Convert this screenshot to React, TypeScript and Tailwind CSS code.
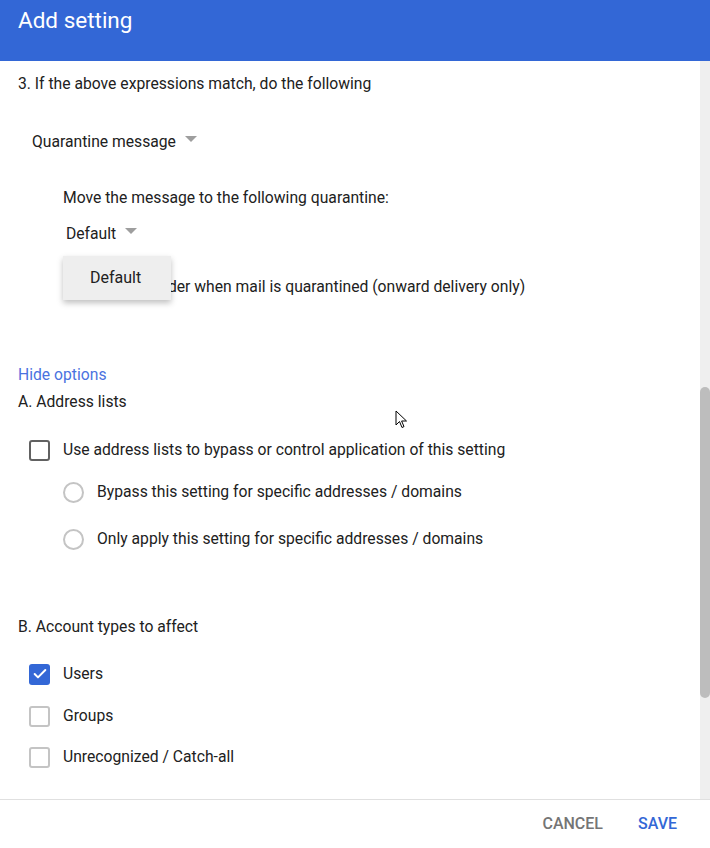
import { Check } from 'lucide-react';

const Caret = () => (
  <span className="ml-[9px] inline-block h-0 w-0 border-x-[6px] border-t-[6px] border-x-transparent border-t-[#9e9e9e] -translate-y-[3px]" />
);

const Box = ({ checked = false, dark = false }: { checked?: boolean; dark?: boolean }) =>
  checked ? (
    <span className="flex h-[21px] w-[21px] items-center justify-center rounded-[3px] bg-[#3367d6]">
      <Check className="h-[16px] w-[16px] text-white" strokeWidth={3} />
    </span>
  ) : (
    <span
      className={`block h-[21px] w-[21px] rounded-[3px] border-2 ${dark ? 'border-[#616161]' : 'border-[#c4c4c4]'}`}
    />
  );

const Radio = () => <span className="block h-[21px] w-[21px] rounded-full border-2 border-[#c4c4c4]" />;

const CheckRow = ({ label, checked, dark, className = '' }: { label: string; checked?: boolean; dark?: boolean; className?: string }) => (
  <div className={`flex h-[20px] items-center pl-[29px] ${className}`}>
    <Box checked={checked} dark={dark} />
    <span className="ml-[13px]">{label}</span>
  </div>
);

const RadioRow = ({ label, className = '' }: { label: string; className?: string }) => (
  <div className={`flex h-[20px] items-center pl-[63px] ${className}`}>
    <Radio />
    <span className="ml-[13px]">{label}</span>
  </div>
);

export default function App() {
  return (
    <div className="relative flex h-[848px] w-[710px] flex-col overflow-hidden bg-white font-['Roboto',sans-serif] text-[15.7px] leading-[20px] text-[#212121]">
      {/* Header */}
      <div className="h-[61px] shrink-0 bg-[#3367d6] px-[18px] pt-[7px] text-[22.5px] leading-[27px] text-white">
        Add setting
      </div>

      {/* Scrollable body */}
      <div className="flex min-h-0 flex-1">
        <div className="flex-1 pl-[18px] pt-[13px]">
          <div>3. If the above expressions match, do the following</div>

          <div className="mt-[38px] flex items-center pl-[14px]">
            <span>Quarantine message</span>
            <Caret />
          </div>

          <div className="mt-[36px] pl-[45px]">Move the message to the following quarantine:</div>

          <div className="relative mt-[16px] pl-[45px]">
            <div className="flex items-center pl-[3px]">
              <span>Default</span>
              <Caret />
            </div>
            <div className="absolute left-[45px] top-[32px] z-10 flex h-[44px] w-[108px] items-center bg-[#eeeeee] pl-[27px] text-[16px] shadow-[0_3px_6px_rgba(0,0,0,0.25)]">
              Default
            </div>
          </div>

          <div className="mt-[33px] flex h-[20px] items-center pl-[45px]">
            <Box />
            <span className="ml-[13px]">Notify sender when mail is quarantined (onward delivery only)</span>
          </div>

          <div className="mt-[68px] text-[#4a72e0]">Hide options</div>
          <div className="mt-[7px]">A. Address lists</div>

          <CheckRow className="mt-[28px] -ml-[18px]" label="Use address lists to bypass or control application of this setting" dark />
          <RadioRow className="mt-[22px] -ml-[18px]" label="Bypass this setting for specific addresses / domains" />
          <RadioRow className="mt-[27px] -ml-[18px]" label="Only apply this setting for specific addresses / domains" />

          <div className="mt-[68px]">B. Account types to affect</div>

          <CheckRow className="mt-[27px] -ml-[18px]" label="Users" checked />
          <CheckRow className="mt-[22px] -ml-[18px]" label="Groups" />
          <CheckRow className="mt-[21px] -ml-[18px]" label="Unrecognized / Catch-all" />
        </div>

        {/* Scrollbar */}
        <div className="flex w-[10px] shrink-0 flex-col bg-[#efefef]">
          <div className="h-[326px] shrink-0" />
          <div className="h-[311px] rounded-full bg-[#bdbdbd]" />
        </div>
      </div>

      {/* Footer */}
      <div className="flex h-[49px] shrink-0 items-center justify-end gap-[35px] border-t border-[#e0e0e0] pr-[33px] text-[16px] font-medium">
        <button className="text-[#757575]">CANCEL</button>
        <button className="text-[#3367d6]">SAVE</button>
      </div>

      {/* Mouse pointer */}
      <svg className="absolute left-[395px] top-[410px]" width="13" height="20" viewBox="0 0 13 20">
        <path d="M1 1 L1 15 L4.5 11.5 L7 17.5 L9 16.6 L6.6 11 L11.5 11 Z" fill="white" stroke="black" strokeWidth="1" strokeLinejoin="round" />
      </svg>
    </div>
  );
}
